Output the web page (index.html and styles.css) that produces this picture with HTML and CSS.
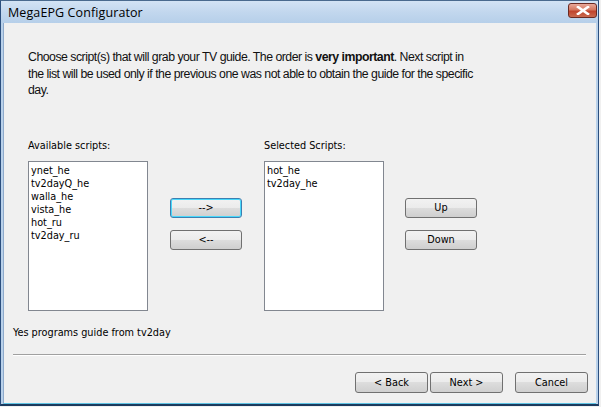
FILE: index.html
```html
<!DOCTYPE html>
<html>
<head>
<meta charset="utf-8">
<link rel="stylesheet" href="styles.css">
</head>
<body>
<div class="window">
  <div class="titlebar">
    <span class="title">MegaEPG Configurator</span>
    <span class="close"><svg width="14" height="9" viewBox="0 0 14 9"><path d="M2 1 L12 8 M12 1 L2 8" stroke="#ffffff" stroke-width="2.6" stroke-linecap="square"/><path d="M2 1 L12 8 M12 1 L2 8" stroke="#ffffff" stroke-width="1"/></svg></span>
  </div>
  <div class="client">
    <p class="intro">Choose script(s) that will grab your TV guide. The order is <b>very important</b>. Next script in the list will be used only if the previous one was not able to obtain the guide for the specific day.</p>
    <div class="lists">
      <div class="col">
        <div class="label">Available scripts:</div>
        <div class="listbox">
          <div>ynet_he</div>
          <div>tv2dayQ_he</div>
          <div>walla_he</div>
          <div>vista_he</div>
          <div>hot_ru</div>
          <div>tv2day_ru</div>
        </div>
      </div>
      <div class="btncol">
        <button class="btn focus">--&gt;</button>
        <button class="btn">&lt;--</button>
      </div>
      <div class="col">
        <div class="label">Selected Scripts:</div>
        <div class="listbox">
          <div>hot_he</div>
          <div>tv2day_he</div>
        </div>
      </div>
      <div class="btncol right">
        <button class="btn">Up</button>
        <button class="btn">Down</button>
      </div>
    </div>
    <div class="status">Yes programs guide from tv2day</div>
    <div class="sep"></div>
    <div class="footer">
      <button class="btn">&lt; Back</button>
      <button class="btn next">Next &gt;</button>
      <button class="btn cancel">Cancel</button>
    </div>
  </div>
</div>
</body>
</html>
```
FILE: styles.css
```css
html, body {
  margin: 0;
  padding: 0;
  background: #f0f0f0;
}
.window {
  width: 599px;
  height: 406px;
  box-sizing: border-box;
  border: 1px solid #2b4f7e;
  border-top-color: #4a6a8e;
  border-bottom: 2px solid #1c3b5e;
  background: #b9d1ea;
  display: flex;
  flex-direction: column;
}
.titlebar {
  height: 22px;
  flex: none;
  display: flex;
  align-items: center;
  justify-content: space-between;
  background: linear-gradient(#d3e3f4, #c2d7ee 50%, #b6cfe9);
  padding: 0 1px 0 7px;
}
.title {
  font-family: "Open Sans", "DejaVu Sans", sans-serif;
  font-size: 12.5px;
  color: #000;
  letter-spacing: 0.1px;
}
.close {
  width: 27px;
  height: 13px;
  margin-top: -3px;
  border: 1px solid #6b2a22;
  border-radius: 3px;
  background: linear-gradient(#e9a99a, #d4775f 45%, #c0432c 55%, #c96a4f);
  display: flex;
  align-items: center;
  justify-content: center;
}
.client {
  flex: 1;
  margin: 0 2px 0 2px;
  border-left: 1px solid #8eaacb;
  border-bottom: 1px solid #5fc3e3;
  background: #f0f0f0;
  display: flex;
  flex-direction: column;
  font-family: "DejaVu Sans Condensed", "DejaVu Sans", sans-serif;
  font-size: 10.8px;
  color: #000;
}
.intro {
  margin: 26px 0 0 24px;
  width: 454px;
  font-family: "Liberation Sans", Arial, sans-serif;
  font-size: 12.3px;
  letter-spacing: -0.5px;
  line-height: 16.5px;
  color: #111;
}
.intro b {
  font-weight: bold;
}
.lists {
  display: flex;
  margin: 40px 0 0 24px;
}
.col {
  display: flex;
  flex-direction: column;
}
.label {
  height: 13px;
  line-height: 13px;
  margin-bottom: 9px;
}
.listbox {
  width: 120px;
  height: 150px;
  box-sizing: border-box;
  border: 1px solid #828790;
  background: #fff;
  padding: 2px 2px;
  line-height: 13px;
}
.btncol {
  display: flex;
  flex-direction: column;
  gap: 12px;
  margin: 59px 22px 0 22px;
}
.btncol.right {
  margin-left: 21px;
}
.btn {
  width: 72px;
  height: 20px;
  box-sizing: border-box;
  border: 1px solid #707070;
  border-radius: 3px;
  background: linear-gradient(#f2f2f2, #ebebeb 50%, #dddddd 50%, #cfcfcf);
  font-family: "DejaVu Sans Condensed", "DejaVu Sans", sans-serif;
  font-size: 10.8px;
  color: #000;
  padding: 0;
  margin: 0;
}
.btn.focus {
  border-color: #3c7fb1;
  box-shadow: inset 0 0 0 1px #48d8fb;
}
.status {
  margin: 15px 0 0 9px;
  line-height: 13px;
}
.sep {
  margin: 15px 10px 0 9px;
  height: 1px;
  background: #a0a0a0;
  border-bottom: 1px solid #fff;
}
.footer {
  display: flex;
  justify-content: flex-end;
  margin: 16px 8px 0 0;
  gap: 2px;
}
.btn.next {
  margin-right: 10px;
}
.footer .btn {
  width: 73px;
  height: 21px;
}
```
